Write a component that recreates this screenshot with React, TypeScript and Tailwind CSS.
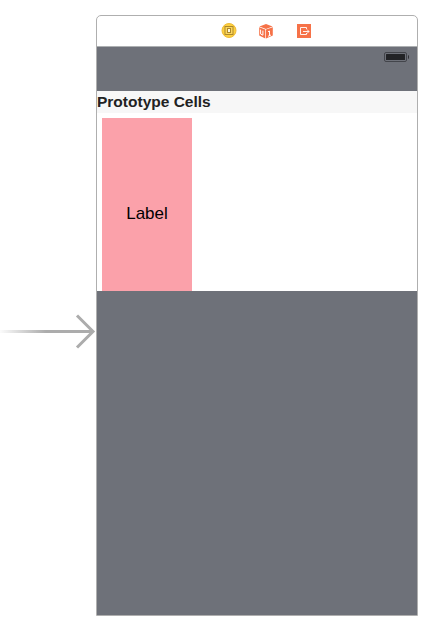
function ViewControllerIcon() {
  return (
    <svg width="16" height="16" viewBox="0 0 16 16">
      <circle cx="8" cy="7.5" r="7" fill="#fdd03f" stroke="#eebb38" />
      <rect x="4" y="3.5" width="8" height="8" fill="#fbd65c" stroke="#ad882c" />
      <rect x="6.5" y="5.5" width="3" height="4" fill="#fff8dc" stroke="#ad882c" />
    </svg>
  );
}

function ResponderIcon() {
  return (
    <svg width="14" height="15" viewBox="0 0 14 15">
      <path d="M7 0 13.6 2.4 7 4.9 0.4 2.4Z" fill="#f67248" />
      <path d="M0.2 3.2 6.3 5.6V14.6L0.2 11.6Z" fill="#f67248" />
      <path d="M13.8 3.2 7 5.6V14.6L13.8 11.6Z" fill="#f67248" />
      <path d="M1.6 5.6V10L3.9 11.2V6.6" fill="none" stroke="#fff" />
      <path d="M9 7.7 10.5 7V12M9 12.3 12 11" fill="none" stroke="#fff" />
    </svg>
  );
}

function ExitIcon() {
  return (
    <svg width="14" height="14" viewBox="0 0 14 14">
      <rect width="14" height="14" fill="#f67248" />
      <path
        d="M9.5 5V3.5H3.5V10.5H9.5V9M6 7.5H12M10 5.5 12 7.5 10 9.5"
        fill="none"
        stroke="#fff"
        strokeOpacity="0.9"
      />
    </svg>
  );
}

function Battery() {
  return (
    <svg width="25" height="10" viewBox="0 0 25 10">
      <rect x="0.5" y="0.5" width="22" height="9" rx="1.5" fill="none" stroke="#43454b" />
      <rect x="2" y="2" width="19" height="6" rx="0.5" fill="#222326" />
      <path d="M24 3Q25 3 25 5T24 7Z" fill="#2b2c30" />
    </svg>
  );
}

function EntryArrow() {
  return (
    <svg className="mt-[313px]" width="96" height="36" viewBox="0 0 96 36">
      <defs>
        <linearGradient id="shaft" gradientUnits="userSpaceOnUse" x1="-2" y1="0" x2="46" y2="0">
          <stop offset="0" stopColor="#acacac" stopOpacity="0" />
          <stop offset="1" stopColor="#acacac" />
        </linearGradient>
      </defs>
      <rect y="17" width="93" height="3" fill="url(#shaft)" />
      <path d="M77 2.5 93 18.5 77 34.5" fill="none" stroke="#acacac" strokeWidth="3" />
    </svg>
  );
}

export default function App() {
  return (
    <div className="flex h-[622px] w-[427px] overflow-hidden bg-white font-['Liberation_Sans',Arial,sans-serif]">
      <div className="w-24 shrink-0">
        <EntryArrow />
      </div>
      <main className="mt-[15px] flex h-[601px] w-[322px] flex-col overflow-hidden rounded-t-[5px] border border-[#afafaf] bg-white">
        <header className="flex h-[31px] shrink-0 items-center border-b border-[#adb0b2] pl-[124px]">
          <ViewControllerIcon />
          <div className="ml-[22px]">
            <ResponderIcon />
          </div>
          <div className="ml-6">
            <ExitIcon />
          </div>
        </header>
        <div className="flex h-11 shrink-0 justify-end bg-[#6e7179] pt-[5px] pr-2">
          <Battery />
        </div>
        <div className="h-[22px] shrink-0 bg-[#f7f7f7] text-[15.5px] leading-[22px] font-bold whitespace-nowrap text-[#222]">
          Prototype Cells
        </div>
        <div className="h-[178px] shrink-0 bg-white pt-[5px] pl-[5px]">
          <div className="flex h-[173px] w-[90px] items-center justify-center bg-[#fba1aa] pt-[18px] text-[17px] leading-5 text-black">
            Label
          </div>
        </div>
        <div className="flex-1 bg-[#6e7179]" />
      </main>
    </div>
  );
}
